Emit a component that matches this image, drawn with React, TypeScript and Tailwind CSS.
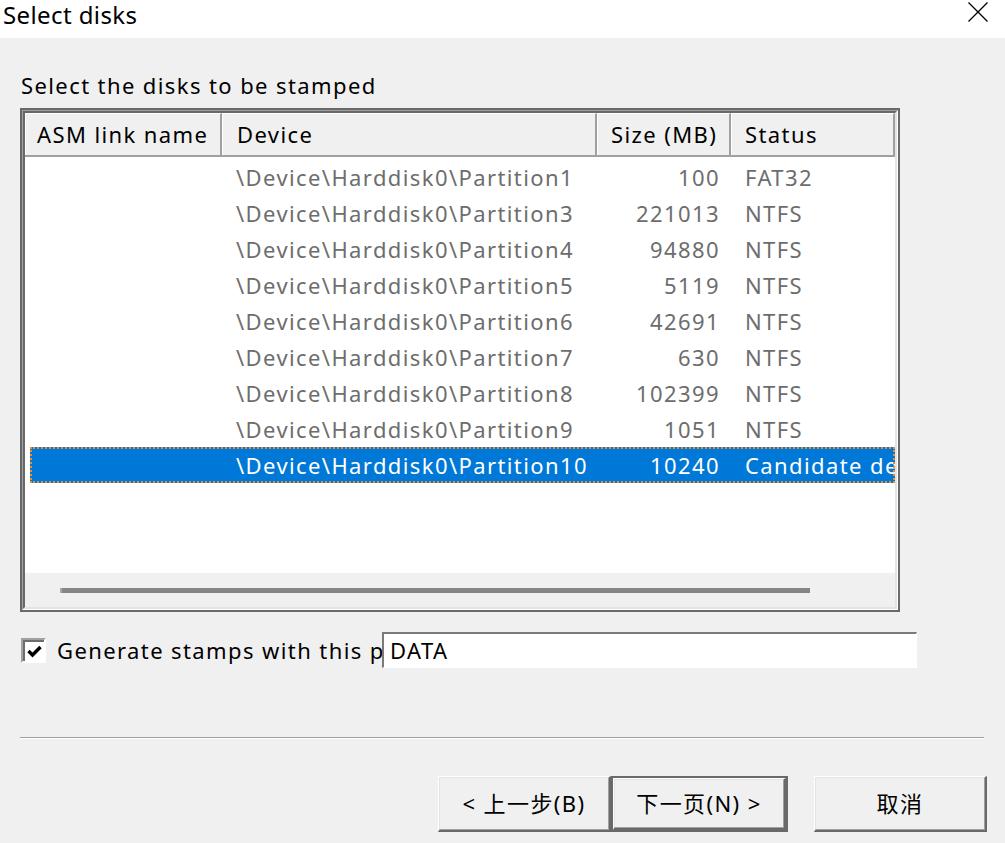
import React from "react";

const rows = [
  { dev: "\\Device\\Harddisk0\\Partition1", size: "100", status: "FAT32" },
  { dev: "\\Device\\Harddisk0\\Partition3", size: "221013", status: "NTFS" },
  { dev: "\\Device\\Harddisk0\\Partition4", size: "94880", status: "NTFS" },
  { dev: "\\Device\\Harddisk0\\Partition5", size: "5119", status: "NTFS" },
  { dev: "\\Device\\Harddisk0\\Partition6", size: "42691", status: "NTFS" },
  { dev: "\\Device\\Harddisk0\\Partition7", size: "630", status: "NTFS" },
  { dev: "\\Device\\Harddisk0\\Partition8", size: "102399", status: "NTFS" },
  { dev: "\\Device\\Harddisk0\\Partition9", size: "1051", status: "NTFS" },
  { dev: "\\Device\\Harddisk0\\Partition10", size: "10240", status: "Candidate device", selected: true },
];

const font = "font-['Noto_Sans','Noto_Sans_CJK_SC',sans-serif]";

function HeaderCell({ label, className }: { label: string; className: string }) {
  return (
    <div className={`h-full flex items-center border-t border-l border-white border-r-2 border-r-[#a0a0a0] bg-[#f0f0f0] text-black whitespace-nowrap overflow-hidden ${className}`}>
      {label}
    </div>
  );
}

function Button({ label, isDefault }: { label: string; isDefault?: boolean }) {
  const inner = (
    <div className="h-full w-full border-t border-l border-white border-b-2 border-r-2 border-b-[#696969] border-r-[#696969]">
      <div className="h-full w-full flex items-center justify-center border-t border-l border-[#e3e3e3] border-b border-r border-b-[#a0a0a0] border-r-[#a0a0a0] bg-[#f0f0f0] text-black">
        {label}
      </div>
    </div>
  );
  if (isDefault) {
    return <div className="w-[177px] h-[56px] border-2 border-[#696969]">{inner}</div>;
  }
  return <div className="w-[173px] h-[56px]">{inner}</div>;
}

export default function App() {
  return (
    <div className={`w-[1005px] h-[843px] bg-[#f0f0f0] flex flex-col text-[22px] tracking-[1.4px] ${font}`}>
      {/* title bar */}
      <div className="h-[38px] bg-white flex items-start justify-between shrink-0">
        <div className="pl-[3px] text-[24px] leading-[30px] tracking-[0.4px] text-black">Select disks</div>
        <svg width="22" height="22" viewBox="0 0 22 22" className="mt-[1px] mr-[16px]">
          <path d="M1.5 1.5 L20.5 20.5 M20.5 1.5 L1.5 20.5" stroke="#000" strokeWidth="1.3" />
        </svg>
      </div>

      <div className="flex flex-col px-[20px]">
        <div className="pt-[33px] leading-[28px] text-black pl-[1px]">Select the disks to be stamped</div>

        {/* list view */}
        <div className="mt-[9px] w-[880px] h-[504px] border-2 border-[#696969]">
          <div className="h-full border border-t-[#a0a0a0] border-l-[#a0a0a0] border-b-white border-r-white">
            <div className="h-full flex flex-col bg-white border-2 border-t-[#696969] border-l-[#696969] border-b-[#e3e3e3] border-r-[#e3e3e3]">
              <div className="h-[44px] flex shrink-0 border-b-2 border-[#a0a0a0] bg-[#f0f0f0]">
                <HeaderCell label="ASM link name" className="w-[197px] pl-[11px]" />
                <HeaderCell label="Device" className="w-[375px] pl-[14px]" />
                <HeaderCell label="Size (MB)" className="w-[134px] pl-[13px]" />
                <HeaderCell label="Status" className="flex-1 pl-[13px]" />
              </div>
              <div className="flex-1 pt-[2px] bg-white overflow-hidden">
                {rows.map((r, i) => (
                  <div
                    key={i}
                    className={`ml-[5px] h-[36px] flex items-center whitespace-nowrap overflow-hidden ${
                      r.selected
                        ? "bg-[#0078d7] text-white outline-2 outline-dotted outline-[#f08a24] -outline-offset-2"
                        : "text-[#6d6d6d]"
                    }`}
                  >
                    <div className="w-[192px] shrink-0" />
                    <div className="w-[375px] shrink-0 pl-[14px]">{r.dev}</div>
                    <div className="w-[134px] shrink-0 pr-[11px] text-right">{r.size}</div>
                    <div className="flex-1 pl-[14px] overflow-hidden">{r.status}</div>
                  </div>
                ))}
              </div>
              <div className="h-[34px] shrink-0 bg-[#f0f0f0] flex items-center">
                <div className="ml-[35px] w-[750px] h-[5px] bg-[#858585] border-l-2 border-[#a8a8a8]" />
              </div>
            </div>
          </div>
        </div>

        {/* checkbox + text field */}
        <div className="mt-[20px] h-[36px] flex items-center">
          <div className="w-[25px] h-[25px] ml-[1px] border-t-2 border-l-2 border-[#a0a0a0] border-b-2 border-r-2 border-b-white border-r-white">
            <div className="w-full h-full bg-white border-t-2 border-l-2 border-[#6d6d6d] flex items-center justify-center">
              <svg width="15" height="13" viewBox="0 0 15 13">
                <path d="M1.5 6 L5.5 10 L13.5 2" stroke="#000" strokeWidth="3.4" fill="none" />
              </svg>
            </div>
          </div>
          <div className="ml-[11px] w-[325px] overflow-hidden whitespace-nowrap text-black">Generate stamps with this prefix</div>
          <div className="w-[535px] h-[36px] border-t-2 border-l-2 border-[#7a7a7a] border-b border-r border-b-white border-r-white bg-white flex items-center pl-[6px] text-black">
            DATA
          </div>
        </div>

        {/* separator */}
        <div className="mt-[69px] w-[964px] border-t border-[#a0a0a0] border-b border-b-white" />

        {/* buttons */}
        <div className="mt-[37px] flex justify-end mr-[-2px]">
          <Button label="< 上一步(B)" />
          <Button label="下一页(N) >" isDefault />
          <div className="w-[26px]" />
          <Button label="取消" />
        </div>
      </div>
    </div>
  );
}
